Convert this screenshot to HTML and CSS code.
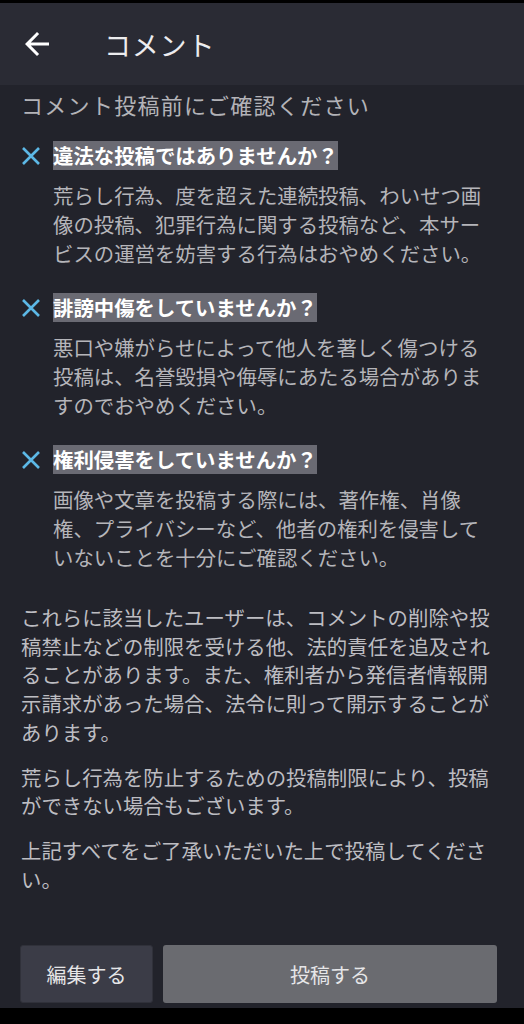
FILE: index.html
```html
<!DOCTYPE html>
<html lang="ja">
<head>
    <meta charset="UTF-8">
    <meta name="viewport" content="width=device-width, initial-scale=1.0">
    <title>コメント</title>
    <link rel="stylesheet" href="styles.css">
</head>
<body>
    <div class="screen">
        <div class="statusbar"></div>
        <div class="appbar">
            <svg class="back" viewBox="0 0 24 24" width="36" height="36">
                <path d="M20 11H7.83l5.59-5.59L12 4l-8 8 8 8 1.41-1.41L7.83 13H20v-2z" fill="#ffffff"/>
            </svg>
            <div class="appbar-title">コメント</div>
        </div>
        <div class="content">
            <p class="lead">コメント投稿前にご確認ください</p>

            <div class="check">
                <div class="check-head">
                    <svg class="mark" viewBox="0 0 20 20" width="20" height="20">
                        <path d="M2 2L18 18M18 2L2 18" stroke="#5cb8e6" stroke-width="2.6" fill="none"/>
                    </svg>
                    <span class="check-title">違法な投稿ではありませんか？</span>
                </div>
                <p class="check-body">荒らし行為、度を超えた連続投稿、わいせつ画像の投稿、犯罪行為に関する投稿など、本サービスの運営を妨害する行為はおやめください。</p>
            </div>

            <div class="check">
                <div class="check-head">
                    <svg class="mark" viewBox="0 0 20 20" width="20" height="20">
                        <path d="M2 2L18 18M18 2L2 18" stroke="#5cb8e6" stroke-width="2.6" fill="none"/>
                    </svg>
                    <span class="check-title">誹謗中傷をしていませんか？</span>
                </div>
                <p class="check-body">悪口や嫌がらせによって他人を著しく傷つける投稿は、名誉毀損や侮辱にあたる場合がありますのでおやめください。</p>
            </div>

            <div class="check">
                <div class="check-head">
                    <svg class="mark" viewBox="0 0 20 20" width="20" height="20">
                        <path d="M2 2L18 18M18 2L2 18" stroke="#5cb8e6" stroke-width="2.6" fill="none"/>
                    </svg>
                    <span class="check-title">権利侵害をしていませんか？</span>
                </div>
                <p class="check-body">画像や文章を投稿する際には、著作権、肖像権、プライバシーなど、他者の権利を侵害していないことを十分にご確認ください。</p>
            </div>

            <p class="note first">これらに該当したユーザーは、コメントの削除や投稿禁止などの制限を受ける他、法的責任を追及されることがあります。また、権利者から発信者情報開示請求があった場合、法令に則って開示することがあります。</p>
            <p class="note">荒らし行為を防止するための投稿制限により、投稿ができない場合もございます。</p>
            <p class="note">上記すべてをご了承いただいた上で投稿してください。</p>

            <div class="actions">
                <button class="btn btn-edit">編集する</button>
                <button class="btn btn-post">投稿する</button>
            </div>
        </div>
        <div class="navbar"></div>
    </div>
</body>
</html>
```

FILE: styles.css
```css
body {
    margin: 0;
    background-color: #000;
    font-family: "Noto Sans CJK JP", "Noto Sans", sans-serif;
}
.screen {
    display: flex;
    flex-direction: column;
    height: 1024px;
}
.statusbar {
    height: 3px;
    background-color: #000;
}
.appbar {
    display: flex;
    align-items: center;
    height: 82px;
    padding-left: 19px;
    background-color: #2a2b34;
}
.back { display: block }
.appbar-title {
    margin-left: 49px;
    font-size: 27px;
    color: #ececee;
    letter-spacing: 0.8px;
}
.content {
    flex: 1;
    display: flex;
    flex-direction: column;
    padding: 4px 33px 0 21px;
    background-color: #22232b;
}
.lead {
    margin: 0 0 22px;
    font-size: 22px;
    line-height: 30px;
    letter-spacing: 1.3px;
    color: #b3b3b8;
}
.check { margin-bottom: 25px }
.check-head {
    display: flex;
    align-items: center;
    gap: 12px;
}
.mark { display: block }
.check-title {
    font-size: 20.4px;
    font-weight: bold;
    line-height: 29px;
    color: #fff;
    background-color: #6a6a73;
}
.check-body {
    margin: 0 0 0 32px;
    padding-top: 11px;
    font-size: 20.4px;
    line-height: 29px;
    color: #b5b5ba;
}
.note {
    margin: 0 0 16px;
    font-size: 20.4px;
    line-height: 28.7px;
    color: #bdbdc2;
}
.note.first { margin-top: 6px }
.actions {
    display: flex;
    gap: 10px;
    margin-top: auto;
    margin-right: -6px;
    margin-left: -1px;
    padding-bottom: 5px;
}
.btn {
    height: 58px;
    border: 1px solid transparent;
    border-radius: 3px;
    font-family: inherit;
    font-size: 20px;
    color: #e6e6e8;
}
.btn-edit {
    width: 133px;
    background-color: #3b3c47;
    border-color: #30313a;
}
.btn-post {
    flex: 1;
    background-color: #6a6b70;
}
.navbar {
    height: 16px;
    background-color: #000;
}
```
